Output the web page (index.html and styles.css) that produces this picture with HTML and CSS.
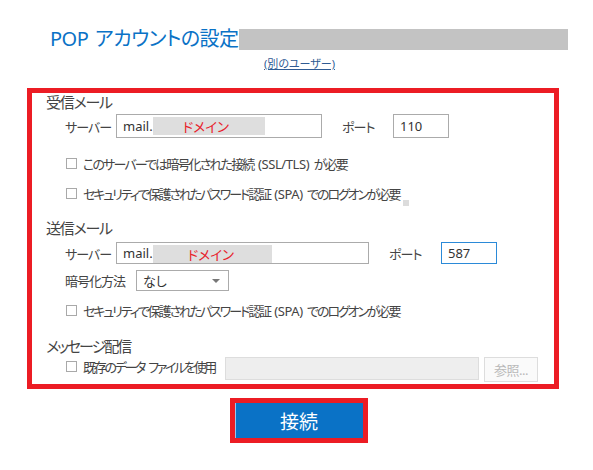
FILE: index.html
```html
<!DOCTYPE html>
<html lang="ja">
<head>
<meta charset="utf-8">
<title>POP アカウントの設定</title>
<link rel="stylesheet" href="styles.css">
</head>
<body>
<div class="page">
  <div class="title-row">
    <h1 class="title">POP アカウントの設定</h1>
    <div class="redact-bar"></div>
  </div>
  <div class="link-row"><a class="other-user" href="#">(別のユーザー)</a></div>

  <div class="settings">
    <div class="section-title">受信メール</div>
    <div class="field-row row-in">
      <span class="label lbl-server">サーバー</span>
      <div class="text-input in-server"><span class="mail">mail.</span><span class="domain">ドメイン</span></div>
      <span class="label lbl-port">ポート</span>
      <div class="text-input port">110</div>
    </div>
    <div class="check-row cr1"><span class="box"></span><span class="check-text t1">このサーバーでは暗号化された接続 <span class="latin">(SSL/TLS)</span> が必要</span></div>
    <div class="check-row cr2"><span class="box"></span><span class="check-text t2">セキュリティで保護されたパスワード認証 <span class="latin">(SPA)</span> でのログオンが必要</span></div>
    <span class="speck"></span>

    <div class="section-title st2">送信メール</div>
    <div class="field-row row-out">
      <span class="label lbl-server">サーバー</span>
      <div class="text-input out-server"><span class="mail">mail.</span><span class="domain domain2">ドメイン</span></div>
      <span class="label lbl-port2">ポート</span>
      <div class="text-input port focused">587</div>
    </div>
    <div class="field-row row-enc">
      <span class="label lbl-enc">暗号化方法</span>
      <div class="select"><span>なし</span><span class="arrow"></span></div>
    </div>
    <div class="check-row cr3"><span class="box"></span><span class="check-text t2">セキュリティで保護されたパスワード認証 <span class="latin">(SPA)</span> でのログオンが必要</span></div>

    <div class="section-title st3">メッセージ配信</div>
    <div class="file-row">
      <div class="check-row cr4"><span class="box"></span><span class="check-text t4">既存のデータ ファイルを使用</span></div>
      <div class="file-input"></div>
      <div class="browse">参照...</div>
    </div>
  </div>

  <div class="connect-wrap">
    <div class="connect">接続</div>
  </div>
</div>
</body>
</html>
```

FILE: styles.css
```css
html, body {
  margin: 0;
  padding: 0;
  background: #fff;
}
body {
  font-family: "Noto Sans", "Noto Sans CJK JP", sans-serif;
  font-feature-settings: "palt";
  color: #444;
  width: 593px;
  height: 470px;
  overflow: hidden;
}
.page {
  padding-top: 27px;
}
.title-row {
  display: flex;
  align-items: center;
  height: 24px;
  padding-left: 50px;
}
.title {
  margin: 0;
  font-weight: normal;
  font-size: 20px;
  line-height: 24px;
  letter-spacing: -0.5px;
  word-spacing: 2px;
  color: #0a72c6;
  white-space: nowrap;
  width: 189px;
}
.redact-bar {
  width: 329px;
  height: 21px;
  background: #c3c3c3;
}
.link-row {
  display: flex;
  justify-content: center;
  padding-left: 6px;
  margin-top: 5px;
  height: 16px;
}
.other-user {
  font-size: 11px;
  line-height: 16px;
  color: #2f5b93;
  text-decoration: underline;
}
.settings {
  position: relative;
  margin-top: 16px;
  margin-left: 27px;
  width: 522px;
  border: 5px solid #ec1c24;
  padding: 0 0 2px 0;
}
.section-title {
  height: 18px;
  line-height: 18px;
  font-size: 15px;
  letter-spacing: -1.2px;
  padding-left: 14px;
  color: #444;
}
.st2 { margin-top: 16px; }
.st3 { margin-top: 17px; letter-spacing: -2px; }
.field-row {
  display: flex;
  align-items: center;
  padding-left: 33px;
  font-size: 13px;
}
.row-in { margin-top: 3px; height: 24px; }
.row-out { margin-top: 5px; height: 22px; }
.row-enc { margin-top: 6px; height: 21px; }
.label { white-space: nowrap; letter-spacing: -1px; }
.lbl-server { width: 51px; }
.lbl-port { width: 51px; margin-left: 20px; }
.lbl-port2 { width: 52px; margin-left: 20px; }
.lbl-enc { width: 71px; }
.text-input {
  box-sizing: border-box;
  height: 100%;
  border: 1px solid #ababab;
  display: flex;
  align-items: center;
  padding-left: 6px;
  font-size: 13px;
  color: #333;
  background: #fff;
}
.in-server { width: 206px; }
.out-server { width: 253px; }
.port { width: 56px; padding-left: 6px; }
.focused { border-color: #2b8ad8; }
.mail { color: #333; }
.domain {
  display: flex;
  align-items: center;
  width: 112px;
  height: 18px;
  background: #dedede;
  color: #e8212b;
  padding-left: 30px;
  box-sizing: border-box;
  font-size: 13.5px;
}
.domain2 {
  width: 119px;
  height: 18px;
  margin-top: 2px;
  padding-left: 35px;
}
.check-row {
  display: flex;
  align-items: center;
  height: 20px;
  padding-left: 34px;
  font-size: 13px;
  white-space: nowrap;
}
.check-text { word-spacing: 3px; }
.t1 { letter-spacing: -1.85px; }
.t2 { letter-spacing: -2.1px; }
.t4 { letter-spacing: -2.3px; }
.latin { letter-spacing: -0.4px; }
.cr1 { margin-top: 15px; }
.cr2 { margin-top: 10px; }
.cr3 { margin-top: 9px; }
.box {
  box-sizing: border-box;
  width: 11px;
  height: 11px;
  border: 1px solid #a9a9a9;
  background: #fff;
  margin-right: 6px;
  flex: none;
}
.speck {
  position: absolute;
  left: 371px;
  top: 107px;
  width: 6px;
  height: 6px;
  background: #dcdcdc;
}
.select {
  box-sizing: border-box;
  width: 93px;
  height: 21px;
  border: 1px solid #ababab;
  display: flex;
  align-items: center;
  justify-content: space-between;
  padding: 0 8px 0 6px;
  font-size: 13px;
  color: #333;
}
.arrow {
  width: 0;
  height: 0;
  border-left: 4px solid transparent;
  border-right: 4px solid transparent;
  border-top: 4px solid #777;
}
.file-row {
  display: flex;
  align-items: flex-start;
  margin-top: 2px;
  height: 25px;
}
.cr4 {
  width: 159px;
  padding-left: 34px;
  box-sizing: content-box;
  margin-top: -1px;
}
.file-input {
  box-sizing: border-box;
  width: 254px;
  height: 23px;
  background: #eeeeee;
  border: 1px solid #dddddd;
}
.browse {
  box-sizing: border-box;
  width: 54px;
  height: 25px;
  margin-left: 5px;
  border: 1px solid #dddddd;
  background: #fafafa;
  color: #b9b9b9;
  font-size: 13px;
  letter-spacing: -0.5px;
  display: flex;
  align-items: center;
  justify-content: center;
}
.connect-wrap {
  margin-top: 9px;
  padding-left: 230px;
}
.connect {
  width: 128px;
  height: 35px;
  border: 5px solid #ec1c24;
  background: #0a72c6;
  box-shadow: inset 1px 0 0 #9cc6ea;
  color: #fff;
  font-size: 19px;
  display: flex;
  align-items: center;
  justify-content: center;
}
```
